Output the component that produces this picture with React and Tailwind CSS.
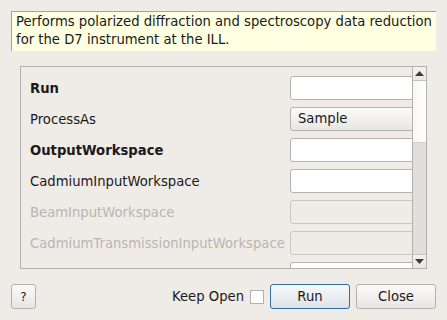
import React from 'react';

const rows = [
  { label: 'Run', bold: true, kind: 'input' },
  { label: 'ProcessAs', kind: 'combo', value: 'Sample' },
  { label: 'OutputWorkspace', bold: true, kind: 'input' },
  { label: 'CadmiumInputWorkspace', kind: 'input' },
  { label: 'BeamInputWorkspace', kind: 'disabled' },
  { label: 'CadmiumTransmissionInputWorkspace', kind: 'disabled' },
  { label: '', kind: 'input' },
];

const Field = ({ kind, value }) => {
  if (kind === 'combo') {
    return (
      <div className="w-[140px] h-[24px] shrink-0 rounded-[3px] border border-[#b6b2ae] bg-gradient-to-b from-[#fbfaf9] to-[#e9e7e5] pl-[7px] flex items-center text-[#1a1a1a]">
        {value}
      </div>
    );
  }
  if (kind === 'disabled') {
    return <div className="w-[140px] h-[24px] shrink-0 rounded-[3px] border border-[#c9c5c1] bg-[#efebe7]" />;
  }
  return <div className="w-[140px] h-[24px] shrink-0 rounded-[3px] border border-[#b6b2ae] bg-white" />;
};

const App = () => {
  return (
    <div
      className="w-[447px] h-[320px] bg-[#efebe7] overflow-hidden text-[13.2px] text-[#1a1a1a]"
      style={{ fontFamily: '"DejaVu Sans", sans-serif' }}
    >
      <div className="mx-[11px] mt-[11px] h-[40px] border-t border-l border-[#a5a19d] bg-[#ffffe1] pl-[4px] pt-[1px] leading-[18px]">
        Performs polarized diffraction and spectroscopy data reduction for the D7 instrument at the ILL.
      </div>

      <div className="ml-[20px] mt-[15px] w-[407px] h-[203px] border border-[#b4b0ac] flex">
        <div className="flex-1 overflow-hidden pt-[9px] pl-[9px]">
          {rows.map((r, i) => (
            <div key={i} className="flex items-center h-[24px] mb-[7px]">
              <div
                className={`w-[260px] shrink-0 whitespace-nowrap pt-[2px] ${r.bold ? 'font-bold' : ''} ${
                  r.kind === 'disabled' ? 'text-[#b9b5b1]' : ''
                }`}
              >
                {r.label}
              </div>
              <Field kind={r.kind} value={r.value} />
            </div>
          ))}
        </div>
        <div className="w-[14px] border-l border-[#b4b0ac] flex flex-col bg-[#e0dfdd]">
          <div className="h-[14px] border-b border-[#c4c0bc] bg-gradient-to-b from-[#f4f3f2] to-[#e9e8e6] flex items-center justify-center">
            <svg width="9" height="5" viewBox="0 0 9 5">
              <path d="M4.5 0 L9 5 L0 5 Z" fill="#3c3c3c" />
            </svg>
          </div>
          <div className="h-[62px] border-b border-[#d4d2d0] bg-gradient-to-r from-[#f6f6f5] to-[#ffffff]" />
          <div className="flex-1" />
          <div className="h-[14px] border-t border-[#c4c0bc] bg-gradient-to-b from-[#f4f3f2] to-[#e9e8e6] flex items-center justify-center">
            <svg width="9" height="5" viewBox="0 0 9 5">
              <path d="M0 0 L9 0 L4.5 5 Z" fill="#3c3c3c" />
            </svg>
          </div>
        </div>
      </div>

      <div className="mt-[15px] px-[11px] flex items-center h-[25px]">
        <div className="w-[25px] h-[25px] rounded-[3px] border border-[#b4b0ac] bg-gradient-to-b from-[#fbfaf9] to-[#e8e6e4] flex items-center justify-center text-[12px]">
          ?
        </div>
        <div className="flex-1" />
        <span>Keep Open</span>
        <div className="ml-[6px] w-[14px] h-[14px] border border-[#b4b0ac] bg-white" />
        <div className="ml-[6px] w-[80px] h-[25px] rounded-[3px] border border-[#2f6f9f] bg-gradient-to-b from-[#f7f9fa] to-[#dde3e8] flex items-center justify-center">
          Run
        </div>
        <div className="ml-[6px] w-[80px] h-[25px] rounded-[3px] border border-[#b4b0ac] bg-gradient-to-b from-[#fbfaf9] to-[#e8e6e4] flex items-center justify-center">
          Close
        </div>
      </div>
    </div>
  );
};

export default App;
